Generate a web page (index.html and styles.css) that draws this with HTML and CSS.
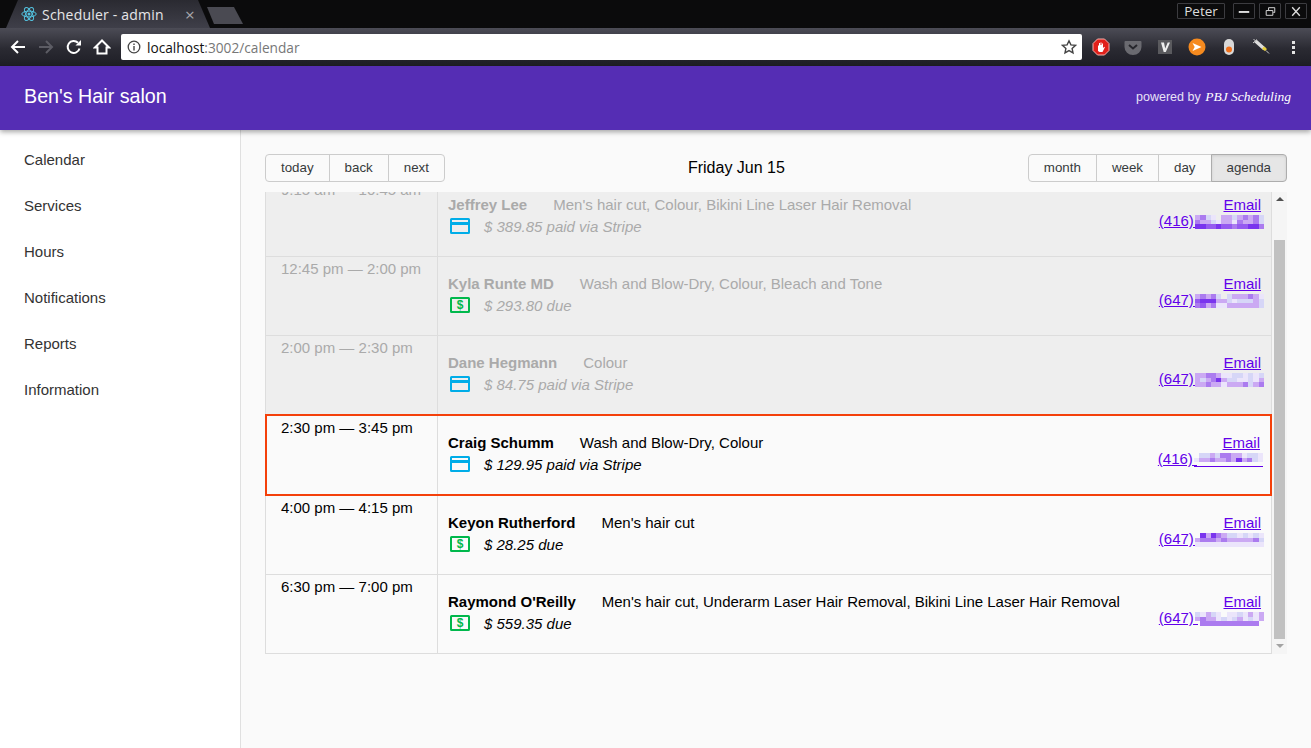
FILE: index.html
```html
<!DOCTYPE html>
<html lang="en">
	<head>
		<meta http-equiv="Content-Type" content="text/html; charset=utf-8" />
		<title>Scheduler - admin</title>
		<link rel="stylesheet" href="styles.css">
	</head>

	<body>
		<!-- browser chrome -->
		<div class="tabstrip">
			<div class="tab">
				<svg class="favicon" viewBox="0 0 16 16" width="16" height="16">
					<g fill="none" stroke="#53c1de" stroke-width="1">
						<ellipse cx="8" cy="8" rx="7.2" ry="2.9"/>
						<ellipse cx="8" cy="8" rx="7.2" ry="2.9" transform="rotate(60 8 8)"/>
						<ellipse cx="8" cy="8" rx="7.2" ry="2.9" transform="rotate(120 8 8)"/>
					</g>
					<circle cx="8" cy="8" r="1.5" fill="#53c1de"/>
				</svg>
				<span class="tab-title">Scheduler - admin</span>
				<span class="tab-close">&#215;</span>
			</div>
			<div class="newtab"></div>
			<div class="winbtns">
				<span class="winuser">Peter</span>
				<span class="winbtn"><svg viewBox="0 0 21 15" width="21" height="15"><path d="M5 8h11" stroke="#ddd" stroke-width="2"/></svg></span>
				<span class="winbtn"><svg viewBox="0 0 21 15" width="21" height="15"><path d="M6.5 6.5h7v5h-7zM9 6V3.5h6.5v5H14" fill="none" stroke="#ddd"/></svg></span>
				<span class="winbtn"><svg viewBox="0 0 21 15" width="21" height="15"><path d="M6.5 3l8 9M14.5 3l-8 9" stroke="#ddd" stroke-width="1.4"/></svg></span>
			</div>
		</div>
		<div class="toolbar">
			<svg class="navicon" viewBox="0 0 18 18" width="18" height="18"><path d="M16 9H3M9 3L3 9l6 6" fill="none" stroke="#fff" stroke-width="2"/></svg>
			<svg class="navicon" viewBox="0 0 18 18" width="18" height="18"><path d="M2 9h13M9 3l6 6-6 6" fill="none" stroke="#5c5c64" stroke-width="2"/></svg>
			<svg class="navicon" viewBox="0 0 18 18" width="18" height="18"><path d="M14.5 10.5A6 6 0 1 1 13 4.8" fill="none" stroke="#fff" stroke-width="2"/><path d="M10.5 7.5H16V2z" fill="#fff"/></svg>
			<svg class="navicon" viewBox="0 0 18 18" width="18" height="18"><path d="M9 2.500L2 9.500h2.500v6h9v-6H16z" fill="none" stroke="#fff" stroke-width="2" stroke-linejoin="miter"/></svg>
			<div class="omnibox">
				<svg class="omni-info" viewBox="0 0 14 14" width="14" height="14"><circle cx="7" cy="7" r="5.800" fill="none" stroke="#444" stroke-width="1.300"/><path d="M7 6v4.500M7 3.500v1.500" stroke="#444" stroke-width="1.400"/></svg>
				<span class="omni-url"><b>localhost</b>:3002/calendar</span>
				<svg class="omni-star" viewBox="0 0 16 16" width="16" height="16"><path d="M8 1.800l1.900 4.100 4.500.5-3.300 3 .9 4.500L8 11.600l-4 2.300.9-4.500-3.300-3 4.500-.5z" fill="none" stroke="#444" stroke-width="1.400"/></svg>
			</div>
			<div class="exts">
				<span class="ext"><svg viewBox="0 0 18 18" width="18" height="18"><path d="M5.500 1h7L17 5.500v7L12.500 17h-7L1 12.500v-7z" fill="#e0201b" stroke="#f3b0ac"/><path d="M6 13V7.500h1V5h1v2h.5V4.500h1V7h.5V5.500h1V10l1.300-1.200.6.500L10.500 14H7.500z" fill="#fff"/></svg></span>
				<span class="ext"><svg viewBox="0 0 18 18" width="18" height="18"><path d="M1.500 3h15a1 1 0 0 1 1 1v5a8.500 8 0 0 1-17 0V4a1 1 0 0 1 1-1z" fill="#6a6a70"/><path d="M5 7l4 3.500L13 7" fill="none" stroke="#26262c" stroke-width="2"/></svg></span>
				<span class="ext"><svg viewBox="0 0 14 14" width="14" height="14"><rect width="14" height="14" fill="#5a5a5e"/><path d="M3 2.500h3l1.200 6 2.500-6H12L7.800 12H5.700z" fill="#eee"/></svg></span>
				<span class="ext"><svg viewBox="0 0 18 18" width="18" height="18"><circle cx="9" cy="9" r="8.500" fill="#f58a1f"/><path d="M4.500 5l9 4-9 4 2.200-4z" fill="#fff"/></svg></span>
				<span class="ext"><svg viewBox="0 0 12 18" width="12" height="18"><rect x="1" y="1" width="10" height="16" rx="5" fill="#d8d8d8"/><circle cx="6" cy="11.500" r="3" fill="#f0701c"/></svg></span>
				<span class="ext"><svg viewBox="0 0 18 18" width="18" height="18"><path d="M3.500 3l9 8" stroke="#ddd" stroke-width="3.500"/><path d="M11 9.500l3 2.700" stroke="#e8cf3a" stroke-width="3"/><path d="M14 12.500l3 3M1 5l4-3.500M1.500 1l2 2" stroke="#ccc"/></svg></span>
				<span class="ext ext-menu"><i></i><i></i><i></i></span>
			</div>
		</div>

		<!-- app -->
		<div class="appbar">
			<div class="appbar-title">Ben's Hair salon</div>
			<div class="appbar-powered">powered by <span class="pbj">PBJ Scheduling</span></div>
		</div>
		<div class="app">
			<ul class="sidenav">
				<li>Calendar</li>
				<li>Services</li>
				<li>Hours</li>
				<li>Notifications</li>
				<li>Reports</li>
				<li>Information</li>
			</ul>
			<div class="main">
				<div class="cal-toolbar">
					<div class="btn-group">
						<button>today</button><button>back</button><button>next</button>
					</div>
					<div class="cal-label">Friday Jun 15</div>
					<div class="btn-group">
						<button>month</button><button>week</button><button>day</button><button class="active">agenda</button>
					</div>
				</div>
				<div class="agenda">
					<div class="agenda-rows">
						<div class="rows-inner">
							<div class="row past">
								<div class="time">9:15 am — 10:45 am</div>
								<div class="detail">
									<div class="who"><b>Jeffrey Lee</b><span>Men's hair cut, Colour, Bikini Line Laser Hair Removal</span></div>
									<div class="pay">
										<svg class="icon-card" viewBox="0 0 20 16" width="20" height="16"><rect x="1" y="1" width="18" height="14" rx=".5" fill="none" stroke="#00ade8" stroke-width="2"/><rect x="1" y="4" width="18" height="3" fill="#00ade8"/></svg>
										<em>$ 389.85 paid via Stripe</em>
									</div>
								</div>
								<div class="contact"><a href="#">Email</a><a href="#">(416) <span class="blur" data-cells="3421033234342|4332133143342|5566566466554"></span></a></div>
							</div>
							<div class="row past">
								<div class="time">12:45 pm — 2:00 pm</div>
								<div class="detail">
									<div class="who"><b>Kyla Runte MD</b><span>Wash and Blow-Dry, Colour, Bleach and Tone</span></div>
									<div class="pay">
										<svg class="icon-dollar" viewBox="0 0 20 16" width="20" height="16"><rect x="1" y="1" width="18" height="14" rx=".5" fill="none" stroke="#00b84c" stroke-width="2"/><text x="10" y="12.300" text-anchor="middle">$</text></svg>
										<em>$ 293.80 due</em>
									</div>
								</div>
								<div class="contact"><a href="#">Email</a><a href="#">(647) <span class="blur" data-cells="3434202333431|6555332122232|4634113333332"></span></a></div>
							</div>
							<div class="row past">
								<div class="time">2:00 pm — 2:30 pm</div>
								<div class="detail">
									<div class="who"><b>Dane Hegmann</b><span>Colour</span></div>
									<div class="pay">
										<svg class="icon-card" viewBox="0 0 20 16" width="20" height="16"><rect x="1" y="1" width="18" height="14" rx=".5" fill="none" stroke="#00ade8" stroke-width="2"/><rect x="1" y="4" width="18" height="3" fill="#00ade8"/></svg>
										<em>$ 84.75 paid via Stripe</em>
									</div>
								</div>
								<div class="contact"><a href="#">Email</a><a href="#">(647) <span class="blur" data-cells="3344311221212|3234532211213|3343313334234"></span></a></div>
							</div>
							<div class="row now">
								<div class="time">2:30 pm — 3:45 pm</div>
								<div class="detail">
									<div class="who"><b>Craig Schumm</b><span>Wash and Blow-Dry, Colour</span></div>
									<div class="pay">
										<svg class="icon-card" viewBox="0 0 20 16" width="20" height="16"><rect x="1" y="1" width="18" height="14" rx=".5" fill="none" stroke="#00ade8" stroke-width="2"/><rect x="1" y="4" width="18" height="3" fill="#00ade8"/></svg>
										<em>$ 129.95 paid via Stripe</em>
									</div>
								</div>
								<div class="contact"><a href="#">Email</a><a href="#">(416) <span class="blur ruled" data-cells="0223244331221|1334334353421|0000000000000"></span></a></div>
							</div>
							<div class="row">
								<div class="time">4:00 pm — 4:15 pm</div>
								<div class="detail">
									<div class="who"><b>Keyon Rutherford</b><span>Men's hair cut</span></div>
									<div class="pay">
										<svg class="icon-dollar" viewBox="0 0 20 16" width="20" height="16"><rect x="1" y="1" width="18" height="14" rx=".5" fill="none" stroke="#00b84c" stroke-width="2"/><text x="10" y="12.300" text-anchor="middle">$</text></svg>
										<em>$ 28.25 due</em>
									</div>
								</div>
								<div class="contact"><a href="#">Email</a><a href="#">(647) <span class="blur" data-cells="0535432212121|3444343333342|1111111111111"></span></a></div>
							</div>
							<div class="row">
								<div class="time">6:30 pm — 7:00 pm</div>
								<div class="detail">
									<div class="who"><b>Raymond O'Reilly</b><span>Men's hair cut, Underarm Laser Hair Removal, Bikini Line Laser Hair Removal</span></div>
									<div class="pay">
										<svg class="icon-dollar" viewBox="0 0 20 16" width="20" height="16"><rect x="1" y="1" width="18" height="14" rx=".5" fill="none" stroke="#00b84c" stroke-width="2"/><text x="10" y="12.300" text-anchor="middle">$</text></svg>
										<em>$ 559.35 due</em>
									</div>
								</div>
								<div class="contact"><a href="#">Email</a><a href="#">(647) <span class="blur" data-cells="2132101121313|3433121231213|0444444444440"></span></a></div>
							</div>
						</div>
					</div>
					<div class="scrollbar">
						<span class="arrow-up"></span>
						<span class="thumb"></span>
						<span class="arrow-down"></span>
					</div>
				</div>
			</div>
		</div>
		<script src="blur.js"></script>
	</body>
</html>
```
FILE: styles.css
```css
* {
	box-sizing: border-box;
}
html, body, ul, li {
	margin: 0;
	padding: 0;
}
li {
	list-style: none;
}
body {
	width: 1311px;
	height: 748px;
	overflow: hidden;
	background: #fafafa;
	font-family: "Liberation Sans", Arial, sans-serif;
	font-size: 15px;
	color: #000;
}

/* browser chrome */
.tabstrip {
	height: 28px;
	background: #0b0b0c;
	display: flex;
	align-items: flex-start;
	padding-left: 6px;
}
.tab {
	width: 204px;
	height: 28px;
	display: flex;
	align-items: center;
	padding: 0 15px 0 15px;
	background: linear-gradient(#2a2a31, #3f3f49);
	clip-path: polygon(0 100%, 12px 0, 192px 0, 204px 100%);
	font-family: "Open Sans", sans-serif;
	font-size: 14px;
	letter-spacing: .2px;
	color: #e6e6e8;
}
.tab-title {
	margin-left: 5px;
	flex: 1;
	white-space: nowrap;
}
.tab-close {
	color: #a8a8ac;
	font-size: 17px;
	margin-right: 0;
}
.newtab {
	width: 36px;
	height: 17px;
	margin: 7px 0 0 -3px;
	background: #4a4a52;
	clip-path: polygon(0 0, 27px 0, 100% 100%, 7px 100%);
}
.winbtns {
	margin: 3px 4px 0 auto;
	display: flex;
	gap: 4px;
}
.winuser, .winbtn {
	height: 16px;
	border: 1px solid #3c3c40;
	border-radius: 1px;
	color: #ddd;
	display: flex;
	align-items: center;
	justify-content: center;
}
.winuser {
	width: 48px;
	margin-right: 4px;
	font-family: "Open Sans", sans-serif;
	font-size: 13.5px;
}
.winbtn {
	width: 22px;
}
.toolbar {
	height: 38px;
	background: linear-gradient(#4c4c56, #2a2a32 55%, #1e1e26);
	display: flex;
	align-items: center;
	padding-left: 9px;
}
.navicon {
	margin-right: 10px;
	flex: none;
}
.omnibox {
	width: 961px;
	height: 26px;
	background: #fff;
	border-radius: 2px;
	display: flex;
	align-items: center;
	padding: 0 5px 0 6px;
	font-family: "Open Sans", sans-serif;
	font-size: 13.7px;
	color: #777;
}
.omni-url {
	margin-left: 6px;
	flex: 1;
}
.omni-url b {
	font-weight: normal;
	color: #111;
}
.exts {
	display: flex;
	margin-left: 3px;
}
.ext {
	width: 32px;
	height: 32px;
	display: flex;
	align-items: center;
	justify-content: center;
}
.ext-menu {
	flex-direction: column;
	gap: 2px;
}
.ext-menu i {
	width: 3px;
	height: 3px;
	background: #e4e4e4;
}

/* app */
.appbar {
	height: 64px;
	background: #552db4;
	box-shadow: 0 2px 5px rgba(0, 0, 0, .35);
	color: #fff;
	display: flex;
	align-items: center;
	justify-content: space-between;
	padding: 0 20px 3px 24px;
	position: relative;
}
.appbar-title {
	font-size: 19.7px;
}
.appbar-powered {
	font-size: 12.5px;
	color: #e8e2f6;
}
.pbj {
	margin-left: 1px;
	font-family: "Liberation Serif", serif;
	font-style: italic;
	font-size: 13.5px;
	color: #fff;
}
.app {
	display: flex;
	height: 618px;
}
.sidenav {
	width: 241px;
	flex: none;
	background: #fff;
	border-right: 1px solid #e0e0e0;
	padding: 7px 0 0 24px;
}
.sidenav li {
	height: 46px;
	line-height: 46px;
	color: #333;
}
.main {
	flex: 1;
	padding: 24px 24px 0;
}
.cal-toolbar {
	display: flex;
	align-items: center;
	justify-content: space-between;
	height: 28px;
	margin-bottom: 10px;
}
.cal-label {
	font-size: 16px;
}
.btn-group {
	display: flex;
}
.btn-group button {
	height: 28px;
	margin: 0 0 0 -1px;
	padding: 0 15px 2px;
	background: #fafafa;
	border: 1px solid #ccc;
	font: 13.33px "Liberation Sans", Arial, sans-serif;
	color: #373a3c;
}
.btn-group button:first-child {
	margin-left: 0;
	border-radius: 4px 0 0 4px;
}
.btn-group button:last-child {
	border-radius: 0 4px 4px 0;
}
.btn-group button.active {
	background: #e6e6e6;
	border-color: #adadad;
	box-shadow: inset 0 1px 3px rgba(0, 0, 0, .1);
}

/* agenda */
.agenda {
	display: flex;
	height: 462px;
}
.agenda-rows {
	flex: 1;
	overflow: hidden;
}
.rows-inner {
	margin-top: -14px;
}
.row {
	height: 79px;
	display: flex;
	border: 1px solid #ddd;
	border-top: none;
}
.row.past {
	background: #eee;
	color: #aaa;
}
.row.now {
	height: 82px;
	margin-top: -1px;
	border: 2px solid #f4400a;
	position: relative;
}
.time {
	width: 172px;
	flex: none;
	border-right: 1px solid #ddd;
	padding: 3px 0 0 15px;
	line-height: 18px;
}
.row.now .time {
	width: 171px;
	padding-left: 14px;
}
.detail {
	flex: 1;
	padding: 18px 0 0 10px;
}
.who {
	display: flex;
	gap: 26px;
	line-height: 18px;
}
.pay {
	display: flex;
	align-items: center;
	height: 22px;
	margin-top: 1px;
	padding-left: 2px;
}
.pay em {
	margin-left: 14px;
}
.icon-dollar text {
	font: bold 12px "Liberation Sans", sans-serif;
	fill: #00b84c;
}
.contact {
	padding: 19px 10px 0 0;
	text-align: right;
	line-height: 16px;
}
.contact a {
	display: block;
	height: 16px;
	color: #6200ea;
}
.blur {
	display: inline-grid;
	grid-template-columns: repeat(13, 5.3px);
	grid-auto-rows: 4.67px;
	width: 69px;
	height: 14px;
	margin: 2px -3px 0 -3px;
	vertical-align: top;
}
.blur.ruled {
	box-shadow: inset 0 -1px #6200ea;
}
.blur i.s0 { background: transparent; }
.blur i.s1 { background: #ebe5fb; }
.blur i.s2 { background: #d6d6f7; }
.blur i.s3 { background: #cba9f3; }
.blur i.s4 { background: #ab7bef; }
.blur i.s5 { background: #7a34ee; }
.blur i.s6 { background: #955af0; }

.scrollbar {
	width: 15px;
	flex: none;
	background: #f5f5f5;
	display: flex;
	flex-direction: column;
	align-items: center;
	padding-top: 5px;
}
.arrow-up {
	border: 4px solid transparent;
	border-top: none;
	border-bottom: 4px solid #505050;
}
.thumb {
	width: 11px;
	height: 399px;
	margin-top: 39px;
	background: #c1c1c1;
}
.arrow-down {
	margin-top: 5px;
	border: 4px solid transparent;
	border-bottom: none;
	border-top: 4px solid #a3a3a3;
}
```
FILE: blur.js
```js
// fills each smudged phone number with its cells
var aBlur = document.querySelectorAll('.blur');

for (var i = 0; i < aBlur.length; i++) {
	var aRow = aBlur[i].getAttribute('data-cells').split('|');
	for (var r = 0; r < aRow.length; r++) {
		for (var c = 0; c < aRow[r].length; c++) {
			var oCell = document.createElement('i');
			oCell.className = 's' + aRow[r].charAt(c);
			aBlur[i].appendChild(oCell);
		}
	}
}
```
